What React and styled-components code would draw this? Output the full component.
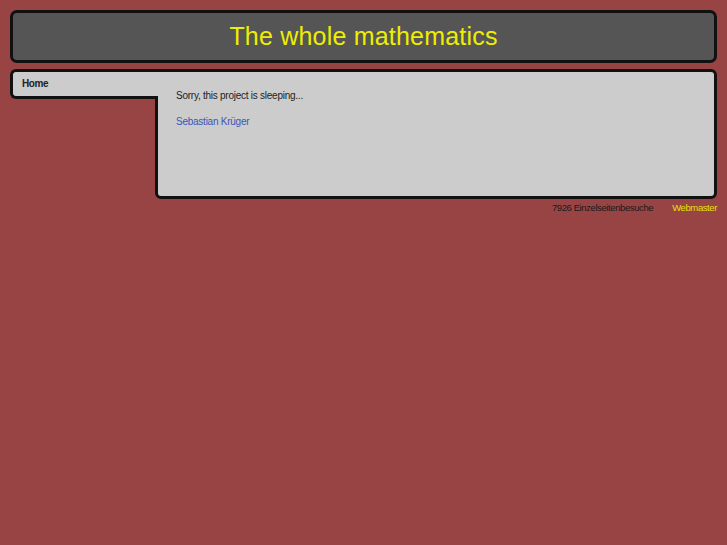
import React from 'react';
import styled, { createGlobalStyle } from 'styled-components';

const GlobalStyle = createGlobalStyle`
  *, *::before, *::after {
    box-sizing: border-box;
  }
  html, body {
    margin: 0;
    padding: 0;
    background: #984444;
    font-family: 'Liberation Sans', Arial, sans-serif;
  }
`;

const Page = styled.div`
  padding: 10px;
  display: flex;
  flex-direction: column;
`;

const Header = styled.header`
  height: 53px;
  background: #555555;
  border: 3px solid #111;
  border-radius: 7px;
  display: flex;
  align-items: center;
  justify-content: center;
`;

const Title = styled.h1`
  margin: 0;
  font-size: 25px;
  font-weight: normal;
  color: #eeee00;
  letter-spacing: 0.2px;
`;

const Body = styled.div`
  display: flex;
  align-items: flex-start;
  margin-top: 6px;
`;

const Nav = styled.nav`
  position: relative;
  z-index: 1;
  width: 148px;
  height: 30px;
  margin-right: -3px;
  background: #cccccc;
  border: 3px solid #111;
  border-right: none;
  border-radius: 6px 0 0 6px;
  display: flex;
  align-items: center;
  padding-left: 9px;
`;

const NavLink = styled.a`
  font-size: 10px;
  font-weight: bold;
  color: #222;
  letter-spacing: -0.4px;
  text-decoration: none;
  margin-top: -1px;
`;

const Main = styled.main`
  flex: 1;
  height: 130px;
  background: #cccccc;
  border: 3px solid #111;
  border-radius: 0 6px 6px 6px;
  padding: 18px 18px 0;
  font-size: 10px;
  letter-spacing: -0.25px;
  color: #222;
`;

const Text = styled.p`
  margin: 0 0 14px;
  line-height: 12px;
`;

const Author = styled.a`
  color: #3a55bb;
  text-decoration: none;
`;

const Footer = styled.footer`
  display: flex;
  justify-content: flex-end;
  gap: 19px;
  margin-top: 3px;
  font-size: 9.5px;
  letter-spacing: -0.4px;
  line-height: 12px;
`;

const Counter = styled.span`
  color: #1a1a1a;
`;

const Webmaster = styled.a`
  color: #e6e000;
  text-decoration: none;
`;

export default function App() {
  return (
    <>
      <GlobalStyle />
      <Page>
        <Header>
          <Title>The whole mathematics</Title>
        </Header>
        <Body>
          <Nav>
            <NavLink href="#">Home</NavLink>
          </Nav>
          <Main>
            <Text>Sorry, this project is sleeping...</Text>
            <Text>
              <Author href="#">Sebastian Krüger</Author>
            </Text>
          </Main>
        </Body>
        <Footer>
          <Counter>7926 Einzelseitenbesuche</Counter>
          <Webmaster href="#">Webmaster</Webmaster>
        </Footer>
      </Page>
    </>
  );
}
